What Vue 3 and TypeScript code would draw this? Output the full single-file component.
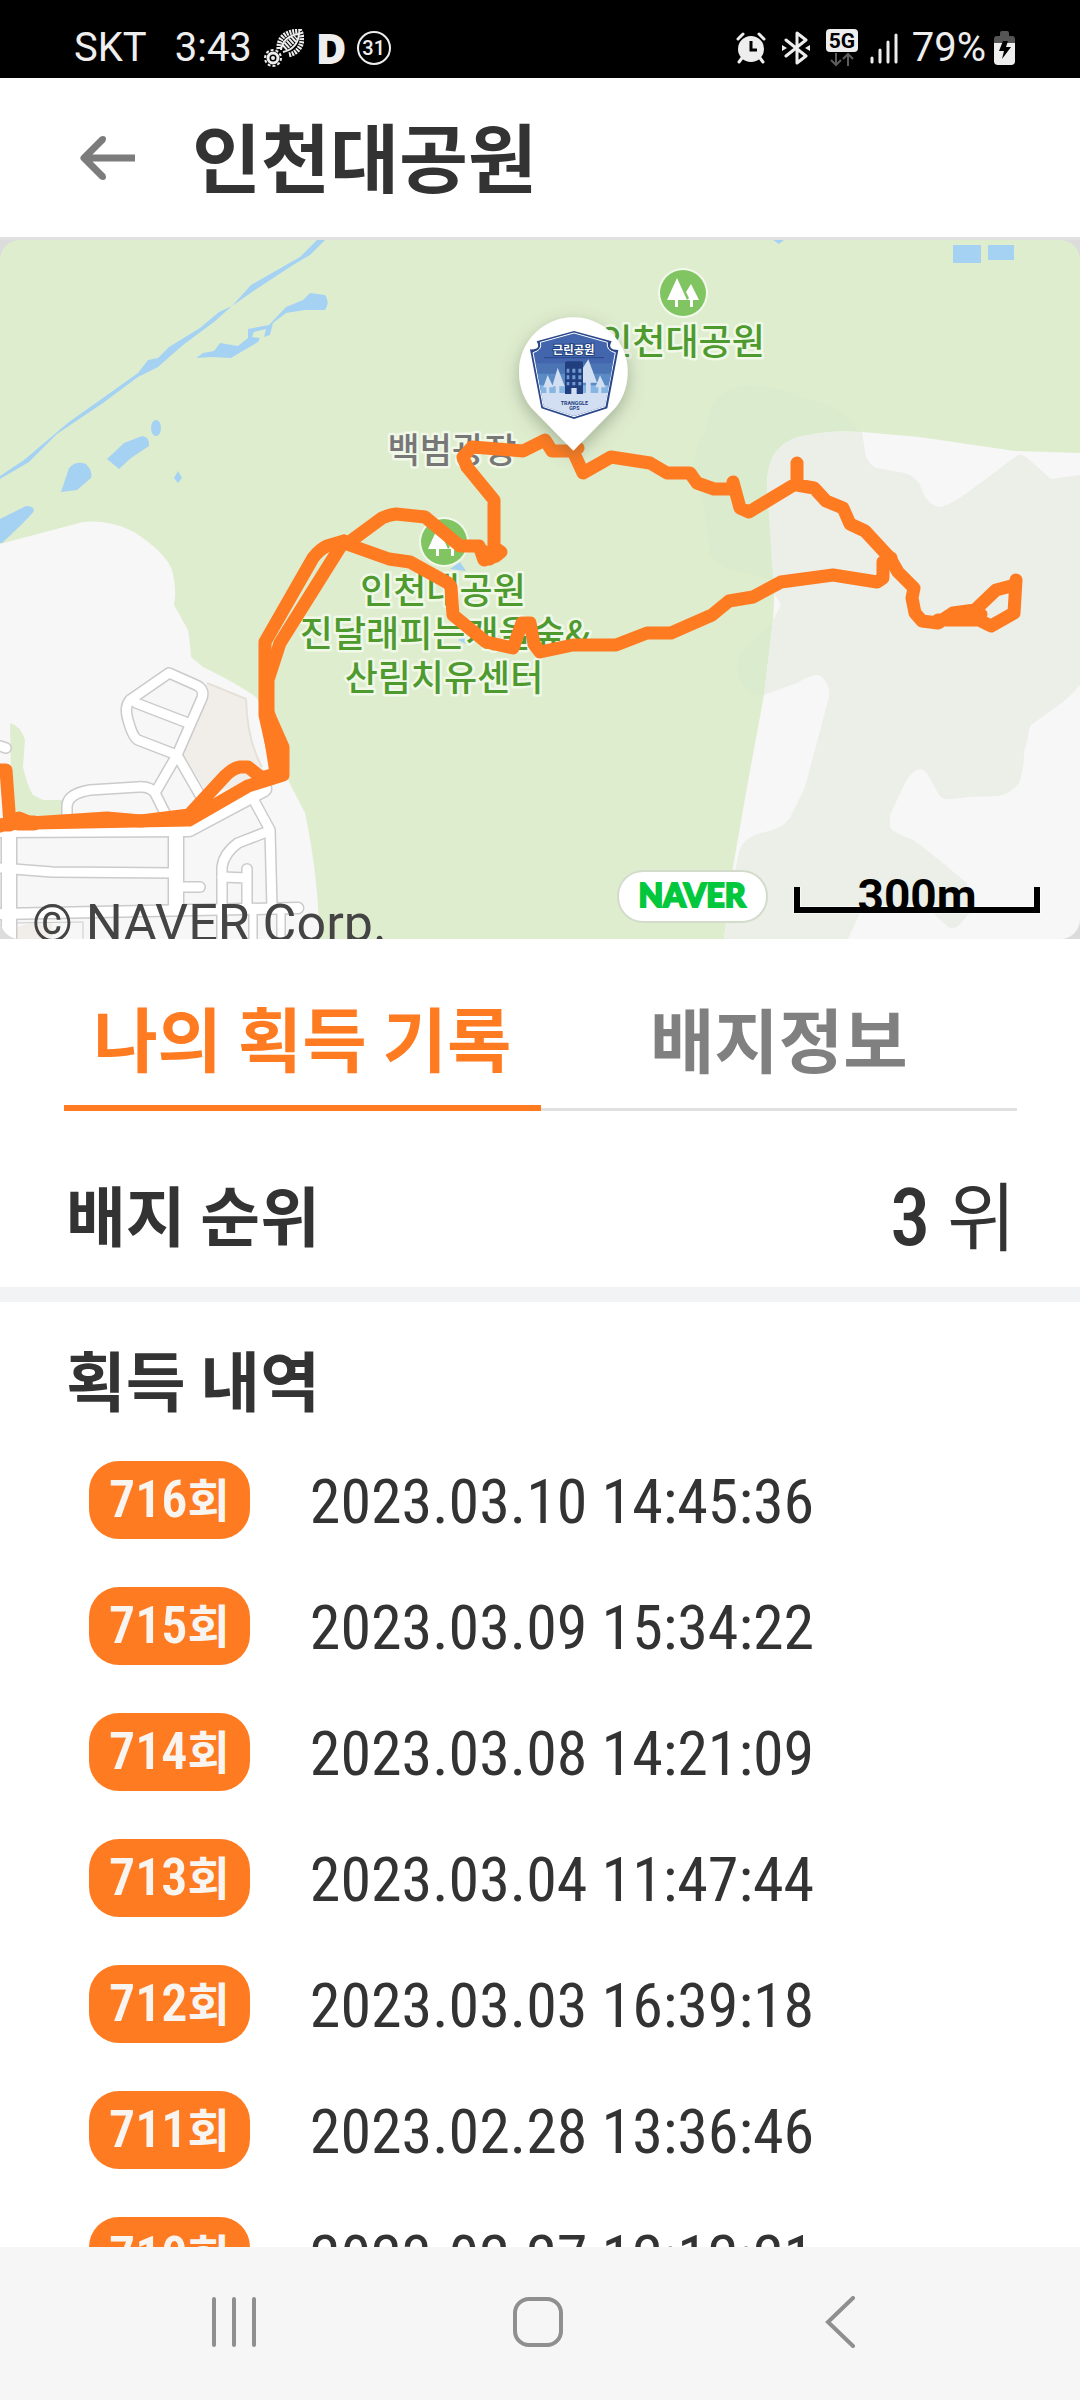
<script setup lang="ts">
import { ref } from 'vue'

interface BadgeRecord {
  count: number
  earnedAt: string
}

const tabs = ['나의 획득 기록', '배지정보']
const activeTab = ref(0)

const records: BadgeRecord[] = [
  { count: 716, earnedAt: '2023.03.10 14:45:36' },
  { count: 715, earnedAt: '2023.03.09 15:34:22' },
  { count: 714, earnedAt: '2023.03.08 14:21:09' },
  { count: 713, earnedAt: '2023.03.04 11:47:44' },
  { count: 712, earnedAt: '2023.03.03 16:39:18' },
  { count: 711, earnedAt: '2023.02.28 13:36:46' },
  { count: 710, earnedAt: '2023.02.27 12:12:21' },
]

// street centre lines, drawn twice: grey casing first, white fill above
const streets: { d: string; w: number }[] = [
  { d: 'M169 433 L196 445 Q205 449 202 458 L177 515 L138 500 Q133 498 128 480 Q124 467 130 460 Z', w: 9 },
  { d: 'M136 463 L188 483', w: 9 },
  { d: 'M177 515 L155 553 L167 577', w: 9 },
  { d: 'M155 553 Q150 546 138 547 L90 550 Q66 554 67 568 V580', w: 9 },
  { d: 'M177 515 L204 562', w: 9 },
  { d: 'M0 590 L189 589 L264 549', w: 14 },
  { d: 'M9 590 V699', w: 14 },
  { d: 'M176 590 V668', w: 14 },
  { d: 'M0 628 L52 632 L176 633', w: 9 },
  { d: 'M0 674 L298 668', w: 10 },
  { d: 'M182 647 H200', w: 9 },
  { d: 'M251 555 L270 590 L272 668', w: 9 },
  { d: 'M269 591 L238 603 Q224 613 222 627 V699', w: 9 },
  { d: 'M222 637 L247 638 M247 629 V668', w: 9 },
  { d: 'M253 672 V699 M281 672 V699', w: 7 },
]
</script>

<template>
  <div class="screen">
    <div class="status">
      <div class="status-left">
        <span class="carrier">SKT</span>
        <span>3:43</span>
        <svg class="shoe" viewBox="0 0 40 38" width="40" height="38">
          <g fill="none" stroke="#eee">
            <path d="M15 20 C14 9 22 2 36 2 C41 12 36 24 24 26" stroke-width="5" stroke-dasharray="2 1" />
            <path d="M17 21 C18 12 25 6 35 5 C34 15 28 21 19 23" stroke-width="2" />
            <path d="M20 19 L32 8" stroke-width="7" stroke-dasharray="2 1" />
            <circle cx="9" cy="29" r="5" stroke-width="3" />
            <circle cx="9" cy="29" r="8" stroke-width="2" stroke-dasharray="3 2" />
            <circle cx="9" cy="29" r="1" stroke-width="2" />
          </g>
        </svg>
        <span class="d-mark">D</span>
        <span class="calendar">31</span>
      </div>
      <div class="status-right">
        <svg viewBox="0 0 30 32" width="30" height="32">
          <circle cx="15" cy="17" r="13" fill="#eee" />
          <path d="M2 7 L7 2 M28 7 L23 2 M6 26 L3 30 M24 26 L27 30" stroke="#eee" stroke-width="3" stroke-linecap="round" />
          <path d="M15 9 V18 H21" fill="none" stroke="#000" stroke-width="3" />
        </svg>
        <svg class="bt" viewBox="0 0 28 34" width="28" height="34">
          <path d="M4 9 L24 25 L15 32 V2 L24 9 L4 25" fill="none" stroke="#eee" stroke-width="3" stroke-linejoin="round" stroke-linecap="round" />
          <path d="M0 14 L5 17 L0 20 Z M28 14 L23 17 L28 20 Z" fill="#eee" />
        </svg>
        <svg class="fiveg" viewBox="0 0 32 38" width="32" height="38">
          <rect width="32" height="23" rx="4" fill="#eee" />
          <text x="16" y="19" text-anchor="middle" class="fiveg-text">5G</text>
          <path d="M10 24 V36 M5 31 L10 36 L15 31 M22 37 V25 M17 30 L22 25 L27 30" fill="none" stroke="#5c5c5c" stroke-width="2" />
        </svg>
        <svg class="signal" viewBox="0 0 28 32" width="28" height="32">
          <path d="M2 26 V30 M10 18 V30 M18 10 V30 M26 3 V30" stroke="#eee" stroke-width="3" stroke-linecap="round" />
        </svg>
        <span>79%</span>
        <svg class="battery" viewBox="0 0 22 34" width="22" height="34">
          <path d="M0 12 V8 Q0 5 3 5 H6 V2 Q6 0 8 0 H13 Q15 0 15 2 V5 H18 Q21 5 21 8 V12 Z" fill="#555" />
          <path d="M0 12 H21 V30 Q21 34 17 34 H4 Q0 34 0 30 Z" fill="#eee" />
          <path d="M9 10 H14 L12 16 H17 L8 28 L10 20 H5 Z" fill="#000" />
        </svg>
      </div>
    </div>

    <header class="bar">
      <button class="back" type="button" aria-label="뒤로">
        <svg viewBox="0 0 58 48" width="58" height="48">
          <path d="M25 5 L6 24 L25 43 M6 24 H57" fill="none" stroke="#7c7c7c" stroke-width="7" stroke-linejoin="round" />
          <circle cx="25" cy="5" r="3" fill="#7c7c7c" />
          <circle cx="25" cy="43" r="3" fill="#7c7c7c" />
        </svg>
      </button>
      <h1>인천대공원</h1>
    </header>

    <div class="map">
      <svg class="map-art" viewBox="0 0 1080 699" role="img" aria-label="인천대공원 지도">
        <defs>
          <filter id="pin-shadow" x="-40%" y="-40%" width="180%" height="180%">
            <feDropShadow dx="0" dy="18" stdDeviation="26" flood-color="#4a5a40" flood-opacity="0.4" />
          </filter>
          <g id="park">
            <circle r="25" fill="#f3f9ec" />
            <circle r="23" fill="#80c562" />
            <path d="M-6 -15 L4 7 H-5 V14 H-8 V7 H-16 Z M8 -9 L16 7 H10 V14 H7 V7 H4 L6 5 L3 -1 Z" fill="#fff" />
          </g>
        </defs>
        <rect width="1080" height="699" fill="#dfedcf" />
        <path d="M693 223 Q694 208 706 190 Q708 148 747 145 Q775 145 802 157 Q848 166 860 192 L790 360 L772 340 L725 328 Q706 318 709 305 Q702 250 693 223 Z M780 380 L772 383 L740 412 Q736 420 737 430 Q744 460 764 455 Z" fill="#dbecce" />

        <!-- ponds and stream -->
        <g fill="#a5d2f3">
          <path d="M317 0 L300 17 L251 45 L232 66 L219 72 L200 88 L169 107 L158 118 L148 120 L138 133 L100 160 L69 182 L24 220 L0 236 V239 L29 222 L57 194 L103 163 L138 137 L158 127 L183 105 L214 82 L232 66 L255 50 L293 25 L310 15 L325 0 Z" />
          <path d="M196 118 L203 113 L214 111 L220 103 L238 106 L248 98 L248 89 L269 85 L286 67 L303 60 L310 53 L325 55 Q329 60 327 66 L325 70 H305 L286 73 L273 83 L270 95 L264 97 L266 89 L254 92 L252 97 L260 98 L258 102 L241 112 L231 118 L212 117 Z" />
          <ellipse cx="156" cy="188" rx="5" ry="8" />
          <path d="M107 219 L124 203 L142 196 Q150 197 149 206 L131 218 L119 229 Z" />
          <path d="M61 252 L69 228 Q76 220 86 224 Q93 231 91 238 L77 250 Z" />
          <path d="M178 231 L182 238 L178 243 L174 238 Z" />
          <path d="M0 279 L26 266 Q34 266 34 271 Q30 277 2 303 H0 Z" />
          <path d="M953 5 H981 V23 H953 Z M988 5 H1014 V20 H988 Z M773 0 H784 L779 4 Z" />
          <path d="M450 329 L460 322 L466 331 Z M458 400 L465 396 L466 404 Z" />
        </g>

        <!-- town on the left -->
        <path d="M0 304 L83 282 Q110 279 134 292 Q165 312 172 330 Q177 350 174 365 L188 390 Q191 410 191 417 L203 427 Q240 445 257 458 L289 542 L305 573 Q319 640 319 699 H0 Z" fill="#f7f7f7" />
        <path d="M10 483 Q21 486 25 500 L23 527 Q27 545 33 555 L43 560 H62 V580 H12 Z" fill="#dfedcf" />
        <path d="M207 443 L246 459 Q247 500 262 527 L269 540 L207 553 L184 515 Z" fill="#f1eeea" />
        <path d="M207 443 L246 459 Q247 500 262 527" fill="none" stroke="#e6e0d9" stroke-width="2" />
        <path d="M15 688 L31 683 H52 V699 H18 Z" fill="#f1eeea" />
        <g fill="none" stroke="#cbcbcb" stroke-linecap="round" stroke-linejoin="round">
          <path v-for="s in streets" :key="'c' + s.d" :d="s.d" :stroke-width="s.w + 3" />
          <path d="M0 506 L6 508" stroke-width="12" />
          <path d="M10 683 L83 682 V699" stroke-width="1" />
        </g>
        <g fill="none" stroke="#fff" stroke-linecap="round" stroke-linejoin="round">
          <path v-for="s in streets" :key="'f' + s.d" :d="s.d" :stroke-width="s.w" />
          <path d="M0 506 L6 508" stroke-width="9" />
        </g>

        <!-- hills on the right -->
        <path d="M809 195 Q830 190 862 192 L919 197 L1015 211 L1080 213 V699 H724 L733 627 L747 547 L764 455 L773 380 L775 340 L767 247 Q766 200 809 195 Z" fill="#f7f7f7" />
        <path d="M809 195 Q830 190 862 192 L866 217 Q870 225 876 228 L905 233 Q918 237 922 250 Q928 266 940 267 Q950 265 967 253 L1015 217 Q1020 213 1026 217 L1051 239 L1080 235 V445 Q1072 455 1063 462 L1031 485 Q1028 490 1028 498 L1024 512 Q1024 530 1019 543 Q1010 555 997 556 L970 557 L950 559 Q943 560 939 555 L929 537 Q926 529 919 529 Q911 532 905 543 L890 575 V587 Q892 592 911 599 Q918 602 967 643 L970 673 L957 687 Q952 689 948 687 L933 673 H860 L848 699 H724 L731 650 L738 617 Q740 597 765 592 Q782 589 790 578 L805 547 L829 457 Q830 440 818 435 Q812 434 797 443 L764 455 L773 380 L781 365 L774 353 L767 247 Q766 200 809 195 Z" fill="#ecefe8" />

        <use href="#park" x="683" y="53" />
        <use href="#park" x="444" y="302" />
        <g class="labels" text-anchor="middle">
          <text x="682" y="115">인천대공원</text>
          <text x="443" y="364">인천대공원</text>
          <text x="445" y="407">진달래피는개울숲&amp;</text>
          <text x="444" y="451">산림치유센터</text>
          <text x="452" y="223" class="place">백범광장</text>
        </g>

        <!-- walked route -->
        <g fill="none" stroke="#ff7b22" stroke-width="13" stroke-linejoin="round" stroke-linecap="round">
          <path d="M0 530 H6 L10 585 H0 M0 586 L19 578 L31 583 L107 578 L141 581 L189 575 L226 535 Q233 528 240 527 H248 L262 538 L278 533 L265 475 V402 L313 318 Q320 309 327 306 L344 301 L348 303 L382 278 Q388 275 396 274 L425 277 L460 306 H479 L484 320 L496 316 L501 312 L494 307 V260 L467 227 L463 217 L472 207 L523 211 L545 200 L552 211 H573 L578 208 L573 211 L583 233 L611 217 L650 223 L667 233 H690 L697 243 L714 249 H733 V242 L740 268 L749 272 L797 243 V223 V245 L814 248 L826 261 L843 268 L850 284 L865 291 L890 318 L898 332 L914 348 L912 358 L915 373 L922 381 L938 383 L953 373 L975 370 L996 350 L1015 345 L1016 340 L1014 373 L991 386 L979 380 H938" />
          <path d="M0 585 L18 583 L34 583 L189 580 L248 546 L283 535 V507 L268 473 V440 L280 403 L344 301" />
          <path d="M18 583 H34 M277 533 L268 475" stroke-width="15" />
          <path d="M344 303 L389 319 L410 322 L448 343 L451 347 L453 375 L486 402 L513 408 L522 383 H530 L534 404 L540 412 L573 405 H616 L647 393 H671 L712 375 L729 361 L753 357 L781 342 L833 335 L877 342 L883 338 V322 L891 318" />
          <path d="M484 310 L490 320 L497 312 M945 379 L982 374" stroke-width="11" />
        </g>

        <!-- badge pin -->
        <svg x="500" y="60" width="150" height="160" viewBox="0 0 450 480" overflow="visible">
          <path d="M220 452 L104 334 C74 304 57 262 57 215 A163 163 0 1 1 383 215 C383 262 366 304 336 334 Z" fill="#fff" filter="url(#pin-shadow)" />
          <path d="M222 93 L335 124 Q320 150 355 150 L322 325 L222 357 L124 325 L90 148 Q125 150 110 124 Z" fill="#29478a" />
          <path d="M222 99 L322 127 Q318 152 346 158 L315 320 L222 350 L130 320 L99 158 Q128 150 121 127 Z" fill="#4265ad" stroke="#fff" stroke-width="3" />
          <path d="M108 190 H338 L333 224 H114 Z" fill="#4a74b4" />
          <path d="M113 221 H334 L326 258 H120 Z" fill="#5b8bc4" />
          <path d="M120 256 H327 L323 280 H124 Z" fill="#86b5e2" />
          <path d="M124 279 H322 L314 319 L222 348 L131 319 Z" fill="#d2def1" />
          <path d="M143 225 L160 262 H148 V280 H139 V262 H130 Z M173 203 L194 259 H178 V280 H167 V259 H157 Z M265 178 L291 248 H272 V280 H258 V248 H248 V205 Z M300 226 L317 262 H304 V280 H295 V262 H286 Z" fill="#d2def1" />
          <path d="M195 196 V187 L201 184 H244 L249 187 V282 H195 Z" fill="#213f7e" />
          <path d="M200 206 h8 v12 h-8 Z m17 0 h9 v12 h-9 Z m18 0 h9 v12 h-9 Z M200 226 h8 v12 h-8 Z m17 0 h9 v12 h-9 Z m18 0 h9 v12 h-9 Z M200 246 h8 v10 h-8 Z m17 0 h9 v10 h-9 Z m18 0 h9 v10 h-9 Z" fill="#6f9bd1" />
          <rect x="214" y="264" width="16" height="18" fill="#d2def1" />
          <path d="M133 173 H312" stroke="#29478a" stroke-width="3" />
          <text x="221" y="161" text-anchor="middle" class="badge-name">근린공원</text>
          <text x="223" y="315" text-anchor="middle" class="badge-maker">TRANGGLE</text>
          <text x="223" y="330" text-anchor="middle" class="badge-maker">GPS</text>
        </svg>

        <rect x="617" y="630" width="151" height="53" rx="26" fill="#d3dccb" />
        <rect x="619" y="632" width="147" height="49" rx="24" fill="#fff" />
        <text x="692" y="667" text-anchor="middle" class="naver">NAVER</text>
        <path d="M797 647 V670 H1037 V647" fill="none" stroke="#fff" stroke-width="8" opacity="0.6" />
        <text x="917" y="672" text-anchor="middle" class="scale">300m</text>
        <path d="M797 647 V670 H1037 V647" fill="none" stroke="#000" stroke-width="6" />
        <text x="32" y="701" class="copyright">© NAVER Corp.</text>
      </svg>
    </div>

    <nav class="tabs">
      <button
        v-for="(tab, i) in tabs"
        :key="tab"
        type="button"
        :class="{ active: activeTab === i }"
        @click="activeTab = i"
      >
        {{ tab }}
      </button>
    </nav>

    <section class="rank">
      <h2>배지 순위</h2>
      <p><strong>3</strong> 위</p>
    </section>

    <section class="history">
      <h2>획득 내역</h2>
      <ul>
        <li v-for="r in records" :key="r.count">
          <span class="pill">{{ r.count }}<span class="unit">회</span></span>
          <time>{{ r.earnedAt }}</time>
        </li>
      </ul>
    </section>

    <nav class="system">
      <button type="button" aria-label="최근 앱">
        <svg viewBox="0 0 52 52" width="52" height="52">
          <path d="M5 3 V49 M25 3 V49 M45 3 V49" stroke="#8f8f8f" stroke-width="4" stroke-linecap="round" />
        </svg>
      </button>
      <button type="button" aria-label="홈">
        <svg viewBox="0 0 52 52" width="52" height="52">
          <rect x="3" y="3" width="46" height="46" rx="14" fill="none" stroke="#8f8f8f" stroke-width="4" />
        </svg>
      </button>
      <button type="button" aria-label="뒤로 가기">
        <svg viewBox="0 0 52 52" width="52" height="52">
          <path d="M39 2 L14 26 L39 50" fill="none" stroke="#8f8f8f" stroke-width="4" stroke-linecap="round" />
        </svg>
      </button>
    </nav>
  </div>
</template>

<style>
body {
  margin: 0;
}
</style>

<style scoped>
.screen {
  display: flex;
  flex-direction: column;
  height: 100vh;
  overflow: hidden;
  background: #fff;
  color: #333;
  font-family: Roboto, 'Noto Sans CJK KR', sans-serif;
}
h1,
h2,
p,
ul {
  margin: 0;
  padding: 0;
}
h1,
h2 {
  font-weight: 700;
}
button {
  padding: 0;
  border: 0;
  background: none;
  color: inherit;
  font: inherit;
}
svg {
  display: block;
}
.status {
  flex: none;
  display: flex;
  justify-content: space-between;
  height: 78px;
  padding: 16px 64px 0 74px;
  box-sizing: border-box;
  background: #000;
  color: #eee;
  font-size: 40px;
  line-height: 64px;
}
.status-left,
.status-right {
  display: flex;
  align-items: center;
  height: 64px;
}
.carrier {
  margin-right: 28px;
}
.shoe {
  margin-left: 12px;
}
.d-mark {
  margin-left: 12px;
  font-family: 'Open Sans', sans-serif;
  font-size: 42px;
  font-weight: 800;
}
.calendar {
  width: 30px;
  height: 30px;
  margin-left: 10px;
  border: 2px solid #eee;
  border-radius: 50%;
  font-size: 20px;
  font-weight: 500;
  line-height: 30px;
  text-align: center;
}
.bt,
.fiveg {
  margin-left: 16px;
}
.fiveg-text {
  fill: #000;
  font-size: 21px;
  font-weight: 700;
}
.signal {
  margin: 0 14px 0 12px;
}
.battery {
  margin-left: 8px;
}
.bar {
  flex: none;
  display: flex;
  align-items: center;
  gap: 56px;
  height: 159px;
  padding: 0 78px;
  border-bottom: 3px solid #e1e1e1;
}
.bar h1 {
  padding-bottom: 6px;
  font-family: 'Noto Sans CJK KR', sans-serif;
  font-size: 75px;
  line-height: 100px;
}
.map {
  flex: none;
  background: #dcdcdc;
}
.map-art {
  width: 100%;
  border-radius: 20px;
}
.labels {
  fill: #4e9a2f;
  stroke: #f0f8e8;
  stroke-width: 5px;
  stroke-linejoin: round;
  paint-order: stroke;
  font-family: 'Noto Sans CJK KR', sans-serif;
  font-size: 36px;
  font-weight: 500;
}
.place {
  fill: #777;
  font-size: 35px;
}
.badge-name {
  fill: #fff;
  stroke: #213f7e;
  stroke-width: 6px;
  paint-order: stroke;
  font-family: 'Noto Sans CJK KR', sans-serif;
  font-size: 34px;
  font-weight: 700;
}
.badge-maker {
  fill: #213f7e;
  font-size: 16px;
  font-weight: 700;
}
.naver {
  fill: #03c73c;
  stroke: #03c73c;
  stroke-width: 2px;
  font-family: Lato, sans-serif;
  font-size: 32px;
  font-weight: 900;
}
.scale {
  font-size: 46px;
  font-weight: 700;
}
.copyright {
  fill: #444;
  font-size: 52px;
}
.tabs {
  flex: none;
  display: grid;
  grid-template-columns: 1fr 1fr;
  margin: 0 63px 0 64px;
  font-family: 'Noto Sans CJK KR', sans-serif;
}
.tabs button {
  height: 172px;
  padding-top: 29px;
  box-sizing: border-box;
  border-bottom: 3px solid #e1e1e1;
  color: #808080;
  font-size: 70px;
  font-weight: 700;
  line-height: 100px;
}
.tabs .active {
  border-bottom: 6px solid #ff7b22;
  color: #ff7b22;
}
.rank {
  flex: none;
  display: flex;
  align-items: center;
  justify-content: space-between;
  height: 191px;
  padding: 28px 64px 0 66px;
  box-sizing: border-box;
  border-bottom: 15px solid #f1f3f5;
}
.rank,
.history {
  font-family: 'Noto Sans CJK KR', sans-serif;
}
h2 {
  font-size: 65px;
  line-height: 92px;
}
.rank p {
  font-size: 75px;
  line-height: 92px;
}
.rank strong {
  font-family: 'Roboto Condensed', 'Noto Sans CJK KR', sans-serif;
  font-size: 80px;
  font-weight: 500;
  line-height: 1;
}
.history {
  flex: 1;
  min-height: 0;
  overflow: hidden;
  padding: 30px 64px 0 66px;
}
.history ul {
  display: grid;
  gap: 48px;
  padding: 37px 0 0 23px;
  list-style: none;
}
.history li {
  display: flex;
  align-items: center;
  gap: 60px;
  height: 78px;
}
.pill {
  padding: 0 20px;
  border-radius: 30px;
  background: #ff7b22;
  color: #f8f4f0;
  font-family: 'Roboto Condensed', Roboto, sans-serif;
  font-size: 52px;
  font-weight: 600;
  line-height: 78px;
}
.unit {
  font-family: 'Noto Sans CJK KR', sans-serif;
  font-size: 46px;
  font-weight: 700;
  line-height: 1;
}
.history time {
  padding-top: 4px;
  font-family: 'Roboto Condensed', Roboto, sans-serif;
  font-size: 62px;
  line-height: 78px;
}
.system {
  flex: none;
  display: flex;
  justify-content: space-between;
  padding: 49px 214px 52px 209px;
  background: #f6f6f6;
}
</style>
